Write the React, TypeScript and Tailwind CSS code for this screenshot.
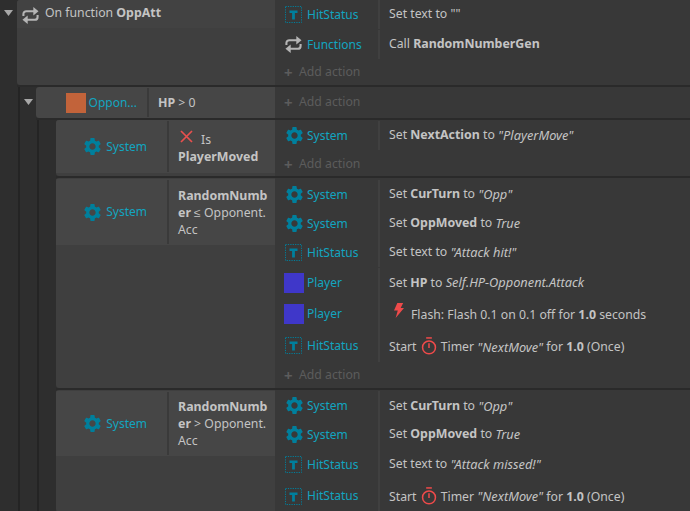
import React from "react";
import { MdSettings } from "react-icons/md";

const Gear = ({ size = 21 }: { size?: number }) => (
  <MdSettings size={size} className="text-[#007f9c] shrink-0" />
);

const TextIcon = () => (
  <svg width="17" height="17" viewBox="0 0 17 17" className="shrink-0 -ml-[1px]">
    <rect x="0.5" y="0.5" width="16" height="16" fill="none" stroke="#007f9c" strokeWidth="1" strokeDasharray="1.2 1.2" />
    <path d="M4.5 4.5h8v2.6H9.9v6.4H7.1V7.1H4.5z" fill="#007f9c" />
  </svg>
);

const Swap = () => (
  <svg width="17" height="17" viewBox="0 0 18 18" className="shrink-0 -ml-[1px]" fill="none">
    <path d="M1.5 9.5V7.5a3 3 0 0 1 3-3H13" stroke="#b5b5b5" strokeWidth="2.2" />
    <path d="M12 0l5.5 4.5L12 9z" fill="#b5b5b5" />
    <path d="M16.5 8.5v2a3 3 0 0 1-3 3H5" stroke="#b5b5b5" strokeWidth="2.2" />
    <path d="M6 9L.5 13.5 6 18z" fill="#b5b5b5" />
  </svg>
);

const Square = ({ color }: { color: string }) => (
  <span className="block w-5 h-5 shrink-0" style={{ backgroundColor: color }} />
);

const Bolt = () => (
  <svg width="10" height="15" viewBox="0 0 12 18" preserveAspectRatio="none" className="shrink-0 ml-[5px] mr-[7px] -mt-[9px]">
    <path d="M4 0h7L8 6h4L2 18l2.5-9H0z" fill="#ee4a4a" />
  </svg>
);

const Timer = () => (
  <svg width="16" height="18" viewBox="0 0 16 19" className="shrink-0 ml-[1px] mr-[4px] -mt-[3px]" fill="none">
    <path d="M5 1h6" stroke="#ee4a4a" strokeWidth="1.6" />
    <circle cx="8" cy="11" r="6.8" stroke="#ee4a4a" strokeWidth="1.6" />
    <path d="M8 6.5V11.5" stroke="#ee4a4a" strokeWidth="1.6" />
  </svg>
);

const Cross = () => (
  <svg width="13" height="13" viewBox="0 0 13 13" className="inline-block mr-[8px] ml-[2px] align-[1px]">
    <path d="M1 1l11 11M12 1L1 12" stroke="#e8504e" strokeWidth="1.7" />
  </svg>
);

const B = ({ children }: { children: React.ReactNode }) => (
  <b className="font-bold text-[12.4px]">{children}</b>
);
const I = ({ children }: { children: React.ReactNode }) => <i className="italic text-[12.8px]">{children}</i>;

function Action({ icon, name, h, tc = "", children }: { icon: React.ReactNode; name: string; h: string; tc?: string; children: React.ReactNode }) {
  return (
    <div className={`flex items-center ${h}`}>
      <div className="w-[105px] h-full flex items-center border-r-2 border-[#404040] pl-[9px] shrink-0">
        <span className="w-[22px] flex justify-center shrink-0 -ml-[1px]">{icon}</span>
        <span className="text-[#12a5c0] text-[12px] ml-[2px]">{name}</span>
      </div>
      <div className={`pl-[9px] flex items-center whitespace-pre ${tc}`}>{children}</div>
    </div>
  );
}

const AddAction = ({ h }: { h: string }) => (
  <div className={`flex items-center pl-[9px] text-[#5c5c5c] ${h}`}>
    <span className="w-[15px] text-[15px] font-bold leading-none">+</span>
    <span>Add action</span>
  </div>
);

const Toggle = () => (
  <svg width="9" height="6" viewBox="0 0 9 6">
    <path d="M0 0h9L4.5 6z" fill="#a8a8a8" />
  </svg>
);

function Block({ gutter, toggle, cond, actions, topPad = "" }: { gutter: string; toggle?: boolean; cond: React.ReactNode; actions: React.ReactNode; topPad?: string }) {
  return (
    <div className="flex">
      <div className={`${gutter} shrink-0 flex justify-center`}>{toggle ? <Toggle /> : null}</div>
      <div className="flex-1 min-w-0 flex border-b-2 border-[#2a2a2a]">
        <div className="flex-1 min-w-0 bg-[#3f3f3f] rounded-bl-[3px] rounded-tl-[3px] overflow-hidden">{cond}</div>
        <div className={`w-[415px] shrink-0 bg-[#383838] ${topPad}`}>{actions}</div>
      </div>
    </div>
  );
}

function Cond({ objIcon, name, pr, h, children }: { objIcon: React.ReactNode; name: string; pr: string; h: string; children: React.ReactNode }) {
  return (
    <div className={`flex bg-[#464646] ${h}`}>
      <div className={`w-[113px] shrink-0 flex items-center justify-end ${pr} border-r-2 border-[#3a3a3a] my-[1px]`}>
        <span className="mr-[3px]">{objIcon}</span>
        <span className="text-[#12a5c0] text-[12px]">{name}</span>
      </div>
      <div className="flex-1 min-w-0 pl-[9px] pr-[5px] flex flex-col justify-center leading-[17px] break-all">{children}</div>
    </div>
  );
}

const Nest = ({ ml, children }: { ml: string; children: React.ReactNode }) => (
  <div className={`${ml} border-l-2 border-[#242424]`}>{children}</div>
);

export default function App() {
  return (
    <div className="w-full h-[511px] overflow-hidden bg-[#2e2e2e] text-[#c4c4c4] text-[12.25px] font-['Open_Sans',sans-serif]">
      <Block
        gutter="w-[17px] pt-[10px]"
        toggle
        cond={
          <div className="h-[28px] bg-[#424242] flex items-center pl-[6px]">
            <span className="mt-[2px] flex"><Swap /></span>
            <span className="ml-[6px] -mt-[2px]">On function <B>OppAtt</B></span>
          </div>
        }
        actions={
          <>
            <Action icon={<TextIcon />} name="HitStatus" h="h-[29px]">Set text to ""</Action>
            <Action icon={<Swap />} name="Functions" h="h-[29px] mt-[1px]">Call <B>RandomNumberGen</B></Action>
            <AddAction h="h-[26px] pt-[1px]" />
          </>
        }
      />
      <Nest ml="ml-[18px]">
        <Block
          gutter="w-[16px] pt-[12px]"
          toggle
          cond={
            <Cond objIcon={<Square color="#c2633a" />} name="Oppon..." pr="pr-[10px]" h="h-[31px]">
              <span className="break-normal"><B>HP</B> &gt; 0</span>
            </Cond>
          }
          actions={<AddAction h="h-[31px] pb-[1px]" />}
        />
        <Nest ml="ml-[17px]">
          <Block
            gutter="w-[17px]"
            cond={
              <Cond objIcon={<Gear />} name="System" pr="pr-[20px]" h="h-[53px]">
                <span className="break-normal mt-[2px]"><Cross />Is</span>
                <B>PlayerMoved</B>
              </Cond>
            }
            actions={
              <>
                <Action icon={<Gear />} name="System" h="h-[30px] pt-[1px]">Set <B>NextAction</B> to <I>"PlayerMove"</I></Action>
                <AddAction h="h-[26px] pt-[2px]" />
              </>
            }
          />
          <Block
            gutter="w-[17px]"
            cond={
              <div className="pt-[1px]">
                <Cond objIcon={<Gear />} name="System" pr="pr-[20px]" h="h-[66px]">
                  <span><B>RandomNumber</B> ≤ Opponent.Acc</span>
                </Cond>
              </div>
            }
            topPad="pt-[2px]"
            actions={
              <>
                <Action icon={<Gear />} name="System" h="h-[29px]">Set <B>CurTurn</B> to <I>"Opp"</I></Action>
                <Action icon={<Gear />} name="System" h="h-[29px]">Set <B>OppMoved</B> to <I>True</I></Action>
                <Action icon={<TextIcon />} name="HitStatus" h="h-[29px]">Set text to <I>"Attack hit!"</I></Action>
                <Action icon={<Square color="#3f37c9" />} name="Player" h="h-[30px] mt-[1px]">Set <B>HP</B> to <I>Self.HP-Opponent.Attack</I></Action>
                <Action icon={<Square color="#3f37c9" />} name="Player" h="h-[31px]" tc="pt-[4px]"><Bolt />Flash: Flash 0.1 on 0.1 off for <B>1.0</B> seconds</Action>
                <Action icon={<TextIcon />} name="HitStatus" h="h-[33px]" tc="pt-[4px]">Start <Timer />Timer <I>"NextMove"</I> for <B>1.0</B> (Once)</Action>
                <AddAction h="h-[26px]" />
              </>
            }
          />
          <Block
            gutter="w-[17px]"
            cond={
              <div className="pt-[1px]">
                <Cond objIcon={<Gear />} name="System" pr="pr-[20px]" h="h-[65px]">
                  <span><B>RandomNumber</B> &gt; Opponent.Acc</span>
                </Cond>
              </div>
            }
            topPad="pt-[1px]"
            actions={
              <>
                <Action icon={<Gear />} name="System" h="h-[29px]" tc="pt-[2px]">Set <B>CurTurn</B> to <I>"Opp"</I></Action>
                <Action icon={<Gear />} name="System" h="h-[29px]">Set <B>OppMoved</B> to <I>True</I></Action>
                <Action icon={<TextIcon />} name="HitStatus" h="h-[31px]">Set text to <I>"Attack missed!"</I></Action>
                <Action icon={<TextIcon />} name="HitStatus" h="h-[32px]" tc="pt-[2px]">Start <Timer />Timer <I>"NextMove"</I> for <B>1.0</B> (Once)</Action>
              </>
            }
          />
        </Nest>
      </Nest>
    </div>
  );
}
